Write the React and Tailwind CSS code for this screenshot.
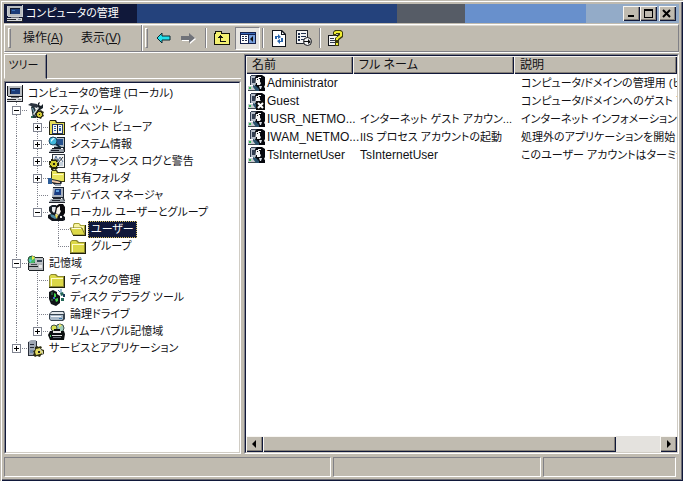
import React from "react";

/* ---------- small drawings ---------- */

function Pic({ w = 18, h = 17, children }) {
  return (
    <svg width={w} height={h} viewBox={`0 0 ${w} ${h}`} className="block shrink-0" aria-hidden="true">
      {children}
    </svg>
  );
}

function ComputerIcon({ light }) {
  return (
    <Pic>
      <path d="M2 1h14v10H2z" fill="#b8bcc0" />
      <path d="M1 1h1v10H1zM16 0h1v11h-1zM2 11h15v1H2z" fill={light ? "#c8ccd0" : "#14161c"} />
      <path d="M4 3h10v6H4z" fill="#1c3c78" />
      <path d="M4 3h10v1H4zM4 3h1v6H4z" fill="#10182c" />
      <path d="M6 5h3v1H6z" fill="#3c74b8" />
      <path d="M5 12h8v1H5z" fill="#6c7078" />
      <path d="M1 13h15v3H1z" fill="#d8dadc" />
      <path d="M16 12h1v4h-1zM1 16h16v1H1zM1 14h9v1H1z" fill="#24262c" />
      <path d="M12 14h3v1h-3z" fill="#808890" />
    </Pic>
  );
}

function ToolsIcon() {
  return (
    <Pic>
      <path d="M1 3l3-2 6 1 2 2-2 2-3-1-1 1-2-2z" fill="#2c3440" />
      <path d="M4 5l3-1 4 9-2 3H6z" fill="#24343c" />
      <path d="M5 6h1l3 8H8z" fill="#78a8b8" />
      <path d="M11 1l2-1-1 3 2 1 2-2v4l-3 2-4 5-2-2 4-5z" fill="#182028" />
      <path d="M11 5l1 1-5 7-1-1z" fill="#d8e0e0" />
      <path d="M10 8h2v1l2-1 1 1 2 1-1 2 1 2-2 1-1 2-2-1h-2l-1-2-1-2 2-2z" fill="#282810" />
      <path d="M11 10h3v1h1v3h-1v1h-3v-1h-1v-3h1z" fill="#d0c838" />
      <path d="M12 12h1v1h-1z" fill="#181818" />
      <path d="M4 14h2v2H4z" fill="#307058" />
    </Pic>
  );
}

function EventIcon() {
  return (
    <Pic>
      <path d="M1 3l1-2h6l1 2h8v13H1z" fill="#242410" />
      <path d="M2 2h5l1 2h8v11H2z" fill="#e4dc58" />
      <path d="M4 5h11v10H4z" fill="#24386c" />
      <path d="M5 6h4v8H5zM10 6h4v8h-4z" fill="#f8f8f0" />
      <path d="M6 7h2v1H6zM6 9h2v1H6zM6 11h2v1H6zM11 7h2v1h-2zM11 9h2v3h-2z" fill="#2860b0" />
      <path d="M9 5h1v10H9z" fill="#202020" />
    </Pic>
  );
}

function SystemInfoIcon() {
  return (
    <Pic>
      <path d="M7 1h9v10H6z" fill="#b0bcc4" />
      <path d="M16 1h1v10h-1zM6 11h11v1H6zM9 1h7v1H9z" fill="#14202c" />
      <path d="M9 3h6v6H9z" fill="#24508c" />
      <circle cx="5" cy="5" r="4" fill="#40b8dc" stroke="#184460" />
      <path d="M3 4l2-2h2L3 6z" fill="#d8f8ff" />
      <path d="M8 8l5 4" stroke="#102c40" strokeWidth="2" />
      <path d="M3 13h12l1 3H1z" fill="#98a0a8" />
      <path d="M1 16h15v1H1zM15 12h2v4h-1zM4 12h9v1H4zM3 14h8v1H3z" fill="#181c24" />
    </Pic>
  );
}

function PerfIcon() {
  return (
    <Pic>
      <path d="M4 1h13v14H4z" fill="#303840" />
      <path d="M5 2h11v12H5z" fill="#f4f4f4" />
      <path d="M6 8l2-5 2 5 2-4 3 5" fill="none" stroke="#506c90" />
      <path d="M10 10l5-6" stroke="#303030" />
      <path d="M11 9h4v4h-4z" fill="#c4d0dc" />
      <path d="M1 8h2V6h2l1 1 2-1 2 2-1 2h2v3H9l1 2-2 2-2-1-1 1H3v-2l-2-1 1-2H1z" fill="#24240c" />
      <path d="M3 8h5v1h1v4H8v1H4v-1H3v-1H2v-2h1z" fill="#d4cc30" />
      <path d="M5 10h2v2H5z" fill="#24240c" />
    </Pic>
  );
}

function SharedIcon() {
  return (
    <Pic>
      <path d="M3 2l1-2h5l1 2h7v10H3z" fill="#3c3c10" />
      <path d="M4 1h4l1 2h7v8H4z" fill="#e8e45c" />
      <path d="M5 4h10v1H5z" fill="#fffcc0" />
      <path d="M0 8h4v6H0z" fill="#2c5c98" />
      <path d="M4 9l5 1 4 1 1 2-2 2H7l-3-2z" fill="#20242c" />
      <path d="M4 10l5 1 3 1v1H9l-5-1z" fill="#f0c8a8" />
      <path d="M7 14h6v2H7z" fill="#98a4b4" />
    </Pic>
  );
}

function DeviceIcon() {
  return (
    <Pic>
      <path d="M5 0h10v10H4z" fill="#a8b0bc" />
      <path d="M15 0h1v10h-1zM4 10h12v1H4zM5 0h10v1H5z" fill="#1c2430" />
      <path d="M7 2h6v6H6z" fill="#183c84" />
      <path d="M8 3h3v2H8z" fill="#60a0dc" />
      <path d="M3 12h12l2 3H1z" fill="#9ca4ac" />
      <path d="M1 15h16v1H1zM5 11h8v1H5zM4 13h8v1H4z" fill="#20242c" />
      <path d="M14 11h2l1 3h-1z" fill="#303840" />
    </Pic>
  );
}

function GroupUsersIcon() {
  return (
    <Pic>
      <path d="M1 3l3-2h4l1 2v5l-2 3H4L1 7z" fill="#182028" />
      <path d="M4 3h4v3l-2 3-2-2z" fill="#e4e8ec" />
      <path d="M8 2l3-2h4l2 3v6l-2 3-5-1-3-3z" fill="#08080c" />
      <path d="M9 4l3-2v4l1 1-2 4-3-2z" fill="#f8f4ec" />
      <path d="M0 11l5-2 4 3 4-2 4 3v3l-2 1H4l-4-3z" fill="#10141c" />
      <path d="M2 10l4 1 3 3-2 1-4-2z" fill="#4888a0" />
      <path d="M8 10l2 1-1 4-2-3z" fill="#e4d858" />
      <path d="M12 12h2v2h-2z" fill="#e8e8e8" />
    </Pic>
  );
}

function FolderIcon() {
  return (
    <Pic>
      <path d="M1 4l2-2h5l2 2h6v11H1z" fill="#8c8830" />
      <path d="M2 4l1-1h4l2 2h6v9H2z" fill="#dcd848" />
      <path d="M3 6h12v1H3zM3 6h1v8H3z" fill="#fffcc8" />
      <path d="M16 4h1v12h-1zM1 15h16v1H1z" fill="#20200c" />
    </Pic>
  );
}

function OpenFolderIcon() {
  return (
    <Pic>
      <path d="M4 4l1-2h5l2 2h4v10H4z" fill="#a8a438" />
      <path d="M5 4l1-1h4l1 2h4v8H5z" fill="#f8f4a0" />
      <path d="M1 7h12l3 7H4z" fill="#dcd848" stroke="#7c7828" />
      <path d="M16 4h1v11h-1zM4 14h13v1H4z" fill="#20200c" />
      <path d="M2 7h10v1H3z" fill="#fffce0" />
    </Pic>
  );
}

function StorageIcon() {
  return (
    <Pic>
      <circle cx="5" cy="5" r="4" fill="#48b868" stroke="#28483c" />
      <path d="M5 1a4 4 0 0 1 3 2L5 5z" fill="#f0ec50" />
      <path d="M2 4l3 1-2 3z" fill="#58c8dc" />
      <path d="M8 3h8v5H8z" fill="#c0c4c8" />
      <path d="M8 2h8v1H8zM16 3h1v6h-1z" fill="#24282c" />
      <path d="M10 5h5v2h-5z" fill="#384858" />
      <path d="M2 8h14v7H2z" fill="#b4b8bc" />
      <path d="M1 8h1v7H1zM16 8h1v8h-1zM2 15h15v1H2zM2 11h9v1H2z" fill="#1c2024" />
      <path d="M12 10h3v3h-3z" fill="#e8e8e8" />
      <path d="M4 9h6v1H4z" fill="#484c50" />
    </Pic>
  );
}

function DefragIcon() {
  return (
    <Pic>
      <path d="M1 3l4-2 4 2v2l3 2v7l-4 3-5-2-2-5z" fill="#101418" />
      <path d="M3 3h2v3H3zM3 10h2v2H3z" fill="#28503c" />
      <path d="M6 4l2 1v3H6zM7 10l3-1v3l-2 1z" fill="#40d048" />
      <path d="M5 8h2v2H5z" fill="#3870c0" />
      <path d="M10 1l2 2M13 0v4" stroke="#3878a8" />
      <path d="M12 4l3-1 1 3-3 1zM13 9h3v3h-3z" fill="#246858" />
      <path d="M15 5h2v3h-2z" fill="#183858" />
    </Pic>
  );
}

function DriveIcon() {
  return (
    <Pic>
      <path d="M1 8l3-3h12l1 3v5l-2 2H3l-2-2z" fill="#384450" />
      <path d="M2 8l2-2h11l1 2z" fill="#e4e8ec" />
      <path d="M2 9h13v4l-1 1H3l-1-1z" fill="#a8b8c8" />
      <path d="M3 10h10v1H3z" fill="#f4f8fc" />
      <path d="M11 12h3v1h-3z" fill="#3c78a8" />
    </Pic>
  );
}

function RemovableIcon() {
  return (
    <Pic>
      <circle cx="12" cy="5" r="4" fill="#a0ccb8" stroke="#405048" />
      <path d="M11 1l3 1-3 3z" fill="#f0e860" />
      <circle cx="6" cy="5" r="3" fill="#d8e050" stroke="#405048" />
      <path d="M2 8h4V6h6v2h4l1 3-1 6H2l-2-5z" fill="#0c1010" />
      <path d="M5 8h8v2H5z" fill="#e8e8e4" />
      <path d="M4 12h10v1H4z" fill="#e0e0e0" />
      <path d="M2 12h1v2H2z" fill="#48c058" />
      <path d="M5 14h8v1H5z" fill="#687078" />
    </Pic>
  );
}

function ServicesIcon() {
  return (
    <Pic>
      <path d="M1 2l3-2h5v13l-2 3H1z" fill="#a0a8b4" />
      <path d="M9 1h1v12H9zM1 15h8v1H1zM1 2h1v13H1zM3 4h4v1H3zM3 7h4v1H3z" fill="#282c38" />
      <path d="M3 10h3v3H3z" fill="#7088a8" />
      <path d="M8 7l2-1 2 1 1-1 2 1-1 2 3 1v4l-3 1-1 2-3-1-2 1-2-2 1-2-1-2 2-1z" fill="#2c2c10" />
      <path d="M9 9l4-1 1 2 2 1v2l-3 1-4 1-1-3z" fill="#e4dc60" />
      <path d="M11 11h2v2h-2z" fill="#202020" />
      <path d="M13 9l3 5" stroke="#c8ccd0" />
    </Pic>
  );
}

function UserIcon({ disabled }) {
  return (
    <Pic w={18} h={18}>
      <path d="M2 2h6v9H2z" fill="#b4bcc8" />
      <path d="M3 1h6v1H3zM2 2h1v9H2zM4 4h3v5H4z" fill="#303c50" />
      <path d="M0 12h9v4H0z" fill="#c8ccd0" />
      <path d="M1 13h2v2H1z" fill="#38b858" />
      <path d="M0 16h8v1H0z" fill="#404850" />
      <path d="M7 3l2-2h5l3 2v8l-1 2 1 1v3h-6l-5-4 2-3z" fill="#05070d" />
      <path d="M8 4h2V3h3v1h-2v1h1v3l1 1-1 2H9V9H8z" fill="#f4f4f4" />
      <path d="M9 5h1v1H9z" fill="#101010" />
      <path d="M5 11l3 1 3 3v2H8l-3-4z" fill="#28506c" />
      {disabled ? (
        <g>
          <path d="M8 9h9v9H8z" fill="#0c0c0c" />
          <path d="M10 11l5 5M15 11l-5 5" stroke="#fff" strokeWidth="2" />
        </g>
      ) : (
        <path d="M11 12h3l-1 3h-1z" fill="#d8e0e8" />
      )}
    </Pic>
  );
}

function UpFolderIcon() {
  return (
    <Pic w={17} h={16}>
      <path d="M0 3h1V1h7v2h8v12H0z" fill="#141408" />
      <path d="M1 4h1V2h5v2h8v10H1z" fill="#f4f070" />
      <path d="M6 5h1v1h1v1h1v1H7v3h5v1H6V8H4V7h1V6h1z" fill="#101010" />
    </Pic>
  );
}

function PaneIcon() {
  return (
    <Pic w={16} h={14}>
      <path d="M0 1h16v12H0z" fill="#14204c" />
      <path d="M1 2h14v1H1z" fill="#3868b8" />
      <path d="M1 4h7v8H1z" fill="#fff" />
      <path d="M9 4h6v8H9z" fill="#78a0dc" />
      <path d="M2 5h2v1H2zM5 5h2v1H5zM2 7h2v1H2zM5 7h2v1H5zM2 9h2v1H2zM5 9h2v1H5z" fill="#243050" />
      <path d="M13 5v6l-3-3z" fill="#0c0c10" />
    </Pic>
  );
}

function RefreshIcon() {
  return (
    <Pic w={14} h={17}>
      <path d="M0 0h10l4 4v13H0z" fill="#10141c" />
      <path d="M1 1h8v4h4v11H1z" fill="#fff" />
      <path d="M10 2l2 2h-2z" fill="#fff" />
      <path d="M3 9V6h3V4l3 3-3 2V7H5v2zM11 8v4H8v2l-3-3 3-2v2h1V8z" fill="#2864ac" />
    </Pic>
  );
}

function ExportIcon() {
  return (
    <Pic w={18} h={17}>
      <path d="M1 0h12v14H1z" fill="#20242c" />
      <path d="M2 1h10v12H2z" fill="#f4f4f4" />
      <path d="M3 3h2v2H3zM3 6h2v2H3zM3 9h2v2H3zM6 3h5v1H6zM6 6h5v1H6zM6 9h3v1H6z" fill="#20304c" />
      <circle cx="12.5" cy="11.5" r="4" fill="#f4f4f4" stroke="#14161c" />
      <path d="M9 11h4V9l3 3-3 2v-2H9z" fill="#101010" />
    </Pic>
  );
}

function HelpIcon() {
  return (
    <Pic w={17} h={17}>
      <path d="M1 5h10v11H1z" fill="#14161c" />
      <path d="M2 6h8v9H2z" fill="#f4f4f4" />
      <path d="M3 8h4v1H3zM3 10h5v1H3zM3 12h5v1H3z" fill="#30384c" />
      <path d="M6 5V2l2-2h6l2 2v5l-4 3v2H8V8l3-2V4H9v2H6z" fill="#3c3c0c" />
      <path d="M7 4V2l2-1h4l2 1v4l-4 3v1H9V8l4-3V3H9v1z" fill="#f0ec30" />
      <path d="M8 12h4v4H8z" fill="#3c3c0c" />
      <path d="M9 13h2v2H9z" fill="#f0ec30" />
    </Pic>
  );
}

function Arrow({ forward }) {
  return (
    <Pic w={15} h={12}>
      {forward ? (
        <g>
          <path d="M1 5h8V2l6 5-6 5V9H1z" fill="#fff" />
          <path d="M0 4h8V1l6 5-6 5V8H0z" fill="#707278" />
        </g>
      ) : (
        <path d="M1 6l5-5v3h8v4H6v3z" fill="#20e0ec" stroke="#0c2830" />
      )}
    </Pic>
  );
}

/* ---------- tree ---------- */

const DOTS = { stroke: "#80828c", strokeDasharray: "1 1" };

function Guide({ up, down, across }) {
  return (
    <svg width="21" height="17" viewBox="0 0 21 17" className="block shrink-0" aria-hidden="true">
      {up && <path d="M10.5 0v9" {...DOTS} />}
      {down && <path d="M10.5 8v9" {...DOTS} />}
      {across && <path d="M10 8.5h11" {...DOTS} />}
    </svg>
  );
}

function Expander({ open, down, label }) {
  return (
    <button type="button" aria-label={label} aria-expanded={open} className="block h-[17px] w-[21px] shrink-0">
      <svg width="21" height="17" viewBox="0 0 21 17" className="block" aria-hidden="true">
        <path d="M10.5 0v4M16 8.5h5" {...DOTS} />
        {down && <path d="M10.5 13v4" {...DOTS} />}
        <rect x="6.5" y="4.5" width="8" height="8" fill="#fff" stroke="#808490" />
        <path d="M8 8.5h5" stroke="#000" />
        {!open && <path d="M10.5 6v5" stroke="#000" />}
      </svg>
    </button>
  );
}

/* guides, one letter per level: "|" line through, "T" branch, "L" last branch, " " blank,
   "+" closed, "E" closed and last, "-" open, "M" open and last */
const TREE = [
  ["", ComputerIcon, "コンピュータの管理 (ローカル)"],
  ["-", ToolsIcon, "システム ツール"],
  ["|+", EventIcon, "イベント ビューア"],
  ["|+", SystemInfoIcon, "システム情報"],
  ["|+", PerfIcon, "パフォーマンス ログと警告"],
  ["|+", SharedIcon, "共有フォルダ"],
  ["|T", DeviceIcon, "デバイス マネージャ"],
  ["|M", GroupUsersIcon, "ローカル ユーザーとグループ"],
  ["| T", OpenFolderIcon, "ユーザー", true],
  ["| L", FolderIcon, "グループ"],
  ["-", StorageIcon, "記憶域"],
  ["|T", FolderIcon, "ディスクの管理"],
  ["|T", DefragIcon, "ディスク デフラグ ツール"],
  ["|T", DriveIcon, "論理ドライブ"],
  ["|E", RemovableIcon, "リムーバブル記憶域"],
  ["E", ServicesIcon, "サービスとアプリケーション"],
];

function Cell({ kind, label }) {
  if (kind === "+") return <Expander open={false} down label={label} />;
  if (kind === "-") return <Expander open down label={label} />;
  if (kind === "M") return <Expander open label={label} />;
  if (kind === "E") return <Expander open={false} label={label} />;
  return <Guide up={kind !== " "} down={kind === "|" || kind === "T"} across={kind === "T" || kind === "L"} />;
}

function Tree() {
  return (
    <ul role="tree" aria-label="ツリー" className="pt-0.5 text-[11px]">
      {TREE.map(([guides, Icon, label, selected]) => (
        <li key={label} role="treeitem" aria-level={guides.length + 1} aria-selected={!!selected} className="flex h-[17px] items-center">
          {guides.split("").map((kind, i) => (
            <Cell key={i} kind={kind} label={label} />
          ))}
          <Icon />
          <span
            className={
              selected
                ? "ml-px border border-dotted border-[#d8c060] bg-[#10183a] px-0.5 leading-[15px] text-white"
                : "ml-1 leading-[17px]"
            }
          >
            {label}
          </span>
        </li>
      ))}
    </ul>
  );
}

/* ---------- list ---------- */

const USERS = [
  ["Administrator", "", "コンピュータ/ドメインの管理用 (ビ"],
  ["Guest", "", "コンピュータ/ドメインへのゲスト ア"],
  ["IUSR_NETMO...", "インターネット ゲスト アカウン...", "インターネット インフォメーション"],
  ["IWAM_NETMO...", "IIS プロセス アカウントの起動", "処理外のアプリケーションを開始"],
  ["TsInternetUser", "TsInternetUser", "このユーザー アカウントはターミナ"],
];

function UserTable() {
  return (
    <table className="w-full table-fixed border-collapse">
      <colgroup>
        <col className="w-[107px]" />
        <col className="w-[161px]" />
        <col />
      </colgroup>
      <thead>
        <tr>
          {["名前", "フル ネーム", "説明"].map((h) => (
            <th
              key={h}
              scope="col"
              className="h-[18px] bg-[#c0bbb0] p-0 pt-px pl-1.5 text-left leading-[17px] font-normal whitespace-nowrap shadow-[inset_1px_1px_0_#f4f2ee,inset_-1px_-1px_0_#10183a,inset_-2px_-2px_0_#858078]"
            >
              {h}
            </th>
          ))}
        </tr>
      </thead>
      <tbody>
        {USERS.map(([name, full, text]) => (
          <tr key={name} className="h-[18px]">
            <td className="p-0 pl-0.5 whitespace-nowrap">
              <span className="flex items-center gap-px leading-[18px]">
                <UserIcon disabled={name === "Guest"} />
                {name}
              </span>
            </td>
            <td className={(full === name ? "text-[12px]" : "text-[11px]") + " p-0 pl-[7px] leading-[18px] whitespace-nowrap"}>{full}</td>
            <td className="p-0 pl-[7px] text-[11px] leading-[18px] whitespace-nowrap">{text}</td>
          </tr>
        ))}
      </tbody>
    </table>
  );
}

/* ---------- chrome ---------- */

const RAISED =
  "bg-[#c0bbb0] shadow-[inset_1px_1px_0_#f8f6f2,inset_-1px_-1px_0_#10183a,inset_-2px_-2px_0_#858078] ";
const SUNKEN = "border border-t-[#808086] border-l-[#808086] border-r-white border-b-white ";
const WELL = "border border-t-[#10183a] border-l-[#10183a] border-r-[#d0ccc4] border-b-[#d0ccc4] bg-white ";

function CaptionButton({ label, children }) {
  return (
    <button type="button" aria-label={label} className={RAISED + "flex h-[15px] w-[17px] items-center justify-center"}>
      <svg width="11" height="9" viewBox="0 0 11 9" aria-hidden="true">
        {children}
      </svg>
    </button>
  );
}

function TitleBar() {
  return (
    <header className="flex h-[19px] shrink-0 items-center bg-[linear-gradient(90deg,#10183a_0_19.7%,#24427c_19.7%_58.2%,#565c66_58.2%_68.3%,#6890cc_68.3%_86.2%,#93abc8_86.2%)] pr-[3px] pl-0.5 text-white">
      <ComputerIcon light />
      <h1 className="ml-0.5 flex-1 truncate text-[11px] leading-[19px]">コンピュータの管理</h1>
      <CaptionButton label="最小化">
        <path d="M2 6h6v2H2z" />
      </CaptionButton>
      <CaptionButton label="最大化">
        <path d="M1 0h9v9H1zM2 2v6h7V2z" fillRule="evenodd" />
      </CaptionButton>
      <span className="w-0.5" />
      <CaptionButton label="閉じる">
        <path d="M1 1l7 7M8 1l-7 7" stroke="#000" strokeWidth="2" />
      </CaptionButton>
    </header>
  );
}

function Grip() {
  return <span className="h-5 w-[3px] shrink-0 border border-t-white border-r-[#808086] border-b-[#808086] border-l-white" />;
}

function Divider() {
  return <span className="h-5 w-0.5 shrink-0 border-r border-l border-r-white border-l-[#808086]" />;
}

function Tool({ label, pressed, children }) {
  return (
    <button
      type="button"
      aria-label={label}
      className={
        pressed
          ? SUNKEN + "flex h-[23px] w-[25px] shrink-0 items-center justify-center bg-[#e6e4e0]"
          : "flex h-[23px] w-[25px] shrink-0 items-center justify-center"
      }
    >
      {children}
    </button>
  );
}

function ToolBar() {
  return (
    <div className="mt-px flex h-[28px] shrink-0 items-center border border-t-white border-r-[#808086] border-b-[#808086] border-l-white shadow-[0_1px_0_#fff,inset_0_1px_0_#dcd8d0]">
      <div className="flex h-full w-[137px] shrink-0 items-center border-r border-r-[#808086] pl-[3px]">
        <Grip />
        <nav className="flex flex-1 items-center gap-[18px] pl-3">
          <button type="button" className="whitespace-nowrap">
            操作(<u>A</u>)
          </button>
          <button type="button" className="whitespace-nowrap">
            表示(<u>V</u>)
          </button>
        </nav>
      </div>
      <div className="flex h-full items-center border-l border-l-white pl-0.5">
        <Grip />
        <span className="w-[3px]" />
        <Tool label="戻る">
          <Arrow />
        </Tool>
        <Tool label="進む">
          <Arrow forward />
        </Tool>
        <span className="w-1" />
        <Divider />
        <span className="w-[3px]" />
        <Tool label="1 つ上のレベルへ">
          <UpFolderIcon />
        </Tool>
        <Tool label="ツリーの表示" pressed>
          <PaneIcon />
        </Tool>
        <span className="w-0.5" />
        <Divider />
        <span className="w-0.5" />
        <Tool label="最新の情報に更新">
          <RefreshIcon />
        </Tool>
        <Tool label="一覧のエクスポート">
          <ExportIcon />
        </Tool>
        <span className="w-[3px]" />
        <Divider />
        <span className="w-0.5" />
        <Tool label="ヘルプ">
          <HelpIcon />
        </Tool>
      </div>
    </div>
  );
}

function ScrollBar() {
  return (
    <div className="flex h-4 shrink-0 bg-[#e4e2de]">
      <button type="button" aria-label="左へスクロール" className={RAISED + "flex w-[17px] items-center justify-center"}>
        <svg width="8" height="8" viewBox="0 0 8 8" aria-hidden="true">
          <path d="M5 0v8L1 4z" />
        </svg>
      </button>
      <div className="flex-1">
        <div className={RAISED + "h-full w-[89%]"} />
      </div>
      <button type="button" aria-label="右へスクロール" className={RAISED + "flex w-[17px] items-center justify-center"}>
        <svg width="8" height="8" viewBox="0 0 8 8" aria-hidden="true">
          <path d="M2 0v8l4-4z" />
        </svg>
      </button>
    </div>
  );
}

export default function App() {
  return (
    <div
      className="flex h-screen w-full flex-col bg-[#c0bbb0] p-1 text-[12px] text-[#101014] shadow-[inset_1px_1px_0_#c0bbb0,inset_2px_2px_0_#fff,inset_-1px_-1px_0_#10183a,inset_-2px_-2px_0_#6c6c74] [font-family:'Liberation_Sans','Noto_Sans_CJK_JP',sans-serif] [font-feature-settings:'palt']"
    >
      <TitleBar />
      <ToolBar />
      <main className="mt-0.5 flex min-h-0 flex-1 gap-[3px]">
        <section className="flex w-[237px] shrink-0 flex-col">
          <div className="flex h-[25px] shrink-0">
            <button
              type="button"
              className="w-[43px] border border-t-white border-r-[#10183a] border-b-transparent border-l-white pr-1 pb-0.5 text-[11px] whitespace-nowrap shadow-[inset_-1px_0_0_#808086]"
            >
              ツリー
            </button>
            <span className="flex-1 border-b border-b-white" />
          </div>
          <div className={SUNKEN + "mt-0.5 min-h-0 flex-1"}>
            <div className={WELL + "h-full overflow-hidden"}>
              <Tree />
            </div>
          </div>
        </section>
        <section className={SUNKEN + "min-w-0 flex-1"}>
          <div className={WELL + "flex h-full flex-col overflow-hidden"}>
            <div className="min-h-0 flex-1 overflow-hidden">
              <UserTable />
            </div>
            <ScrollBar />
          </div>
        </section>
      </main>
      <footer className="mt-[3px] flex h-5 shrink-0 gap-0.5 pr-[3px]">
        <div className={SUNKEN + "flex-[328]"} />
        <div className={SUNKEN + "flex-[209]"} />
        <div className={SUNKEN + "flex-[132]"} />
      </footer>
    </div>
  );
}
